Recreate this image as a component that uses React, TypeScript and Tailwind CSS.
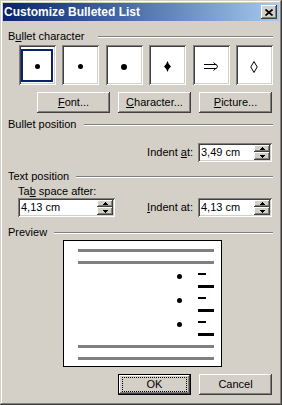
import React from "react";

const raised =
  "shadow-[inset_-1px_-1px_0_#404040,inset_1px_1px_0_#ffffff,inset_-2px_-2px_0_#808080,inset_2px_2px_0_#d4d0c8]";
const sunken =
  "shadow-[inset_1px_1px_0_#808080,inset_-1px_-1px_0_#ffffff,inset_2px_2px_0_#404040,inset_-2px_-2px_0_#d4d0c8]";

function GroupHeader({ children, gap, className = "" }: { children: React.ReactNode; gap: string; className?: string }) {
  return (
    <div className={`flex items-center h-[13px] ${className}`}>
      <span className="whitespace-nowrap">{children}</span>
      <div className={`flex-1 h-[2px] border-t border-t-[#808080] border-b border-b-white ${gap}`} />
    </div>
  );
}

function Button({ children, isDefault = false }: { children: React.ReactNode; isDefault?: boolean }) {
  if (isDefault) {
    return (
      <div className={`relative w-[73px] h-[21px] border border-black flex items-center justify-center ${raised}`}>
        <div className="absolute top-[2px] bottom-[2px] left-[3px] right-[3px] border border-dotted border-black" />
        <span>{children}</span>
      </div>
    );
  }
  return (
    <div className={`w-[73px] h-[21px] flex items-center justify-center ${raised}`}>
      <span>{children}</span>
    </div>
  );
}

function Spin() {
  return (
    <div className="flex flex-col w-[16px] h-full py-[2px] mr-[2px]">
      <div className={`h-[7px] flex items-center justify-center bg-[#d4d0c8] ${raised}`}>
        <svg width="5" height="3" viewBox="0 0 5 3" shapeRendering="crispEdges">
          <rect x="2" y="0" width="1" height="1" fill="#000" />
          <rect x="1" y="1" width="3" height="1" fill="#000" />
          <rect x="0" y="2" width="5" height="1" fill="#000" />
        </svg>
      </div>
      <div className={`h-[8px] flex items-center justify-center bg-[#d4d0c8] ${raised}`}>
        <svg width="5" height="3" viewBox="0 0 5 3" shapeRendering="crispEdges">
          <rect x="0" y="0" width="5" height="1" fill="#000" />
          <rect x="1" y="1" width="3" height="1" fill="#000" />
          <rect x="2" y="2" width="1" height="1" fill="#000" />
        </svg>
      </div>
    </div>
  );
}

function SpinInput({ value, w }: { value: string; w: string }) {
  return (
    <div className={`${w} h-[19px] bg-white flex items-center ${sunken}`}>
      <span className="flex-1 pl-[3px] text-black">{value}</span>
      <Spin />
    </div>
  );
}

function BulletBox({ children, selected = false }: { children: React.ReactNode; selected?: boolean }) {
  return (
    <div className={`relative w-[37px] h-[40px] bg-white flex items-center justify-center pt-[3px] ${sunken}`}>
      {selected && <div className="absolute top-[4px] bottom-[3px] left-[2px] right-[3px] border-2 border-[#0a246a]" />}
      {children}
    </div>
  );
}

function Dot({ size }: { size: string }) {
  return <div className={`${size} rounded-full bg-black`} />;
}

function PreviewItem() {
  return (
    <div className="h-[24px] flex">
      <div className="w-[99px] shrink-0" />
      <div className="w-[5px] h-[5px] shrink-0 mt-[1px] rounded-full bg-black" />
      <div className="w-[16px] shrink-0 ml-[16px] flex flex-col items-start">
        <div className="w-[8px] h-[2px] bg-black" />
        <div className="w-[16px] h-[3px] mt-[10px] bg-black" />
      </div>
    </div>
  );
}

export default function App() {
  return (
    <div
      className={`w-[282px] h-[405px] bg-[#d4d0c8] p-[3px] flex flex-col text-black shadow-[inset_-1px_-1px_0_#404040,inset_1px_1px_0_#d4d0c8,inset_-2px_-2px_0_#808080,inset_2px_2px_0_#ffffff]`}
      style={{ fontFamily: '"Liberation Sans", Arial, sans-serif' }}
    >
      {/* Title bar */}
      <div className="h-[18px] flex items-center bg-gradient-to-r from-[#0a246a] to-[#a6caf0] pl-[1px] pr-[2px]">
        <span className="flex-1 text-white font-bold text-[12px] leading-[14px] whitespace-nowrap">
          Customize Bulleted List
        </span>
        <div className={`w-[16px] h-[14px] bg-[#d4d0c8] flex items-center justify-center ${raised}`}>
          <svg width="8" height="7" viewBox="0 0 8 7">
            <path d="M0.5 0.5L7.5 6.5M7.5 0.5L0.5 6.5" stroke="#000" strokeWidth="1.7" />
          </svg>
        </div>
      </div>

      <div className="flex flex-col pl-[5px] pr-[6px] text-[11px] leading-[13px]">
        <GroupHeader gap="ml-[14px]" className="mt-[9px]">
          B<span className="underline">u</span>llet character
        </GroupHeader>

        <div className="flex mt-[2px] pl-[11px] gap-[6.4px]">
          <BulletBox selected>
            <Dot size="w-[5px] h-[5px]" />
          </BulletBox>
          <BulletBox>
            <Dot size="w-[5px] h-[5px]" />
          </BulletBox>
          <BulletBox>
            <Dot size="w-[6px] h-[6px]" />
          </BulletBox>
          <BulletBox>
            <svg width="7" height="11" viewBox="0 0 7 11">
              <path d="M3.5 0 Q4.5 3.5 7 5.5 Q4.5 7.5 3.5 11 Q2.5 7.5 0 5.5 Q2.5 3.5 3.5 0Z" fill="#000" />
            </svg>
          </BulletBox>
          <BulletBox>
            <svg width="15" height="9" viewBox="0 0 15 9">
              <path d="M0 2.5H12.5M0 6.5H12.5M9.5 0.5L14 4.5L9.5 8.5" stroke="#000" strokeWidth="1" fill="none" />
            </svg>
          </BulletBox>
          <BulletBox>
            <svg width="8" height="12" viewBox="0 0 8 12">
              <path d="M4 0.5L7.2 6L4 11.5L0.8 6Z" stroke="#000" strokeWidth="1" fill="none" />
            </svg>
          </BulletBox>
        </div>

        <div className="flex justify-end gap-[8px] pr-[1px] mt-[7px]">
          <Button>
            <span className="underline">F</span>ont...
          </Button>
          <Button>
            <span className="underline">C</span>haracter...
          </Button>
          <Button>
            <span className="underline">P</span>icture...
          </Button>
        </div>

        <GroupHeader gap="ml-[7px]" className="mt-[5px]">
          Bullet position
        </GroupHeader>

        <div className="flex justify-end items-center gap-[5px] pr-[1px] mt-[12px]">
          <span>
            Indent <span className="underline">a</span>t:
          </span>
          <SpinInput value="3,49 cm" w="w-[74px]" />
        </div>

        <GroupHeader gap="ml-[7px]" className="mt-[8px]">
          Text position
        </GroupHeader>

        <div className="flex items-end mt-[2px]">
          <div className="flex flex-col ml-[10px]">
            <span className="h-[13px]">
              Ta<span className="underline">b</span> space after:
            </span>
            <SpinInput value="4,13 cm" w="w-[97px]" />
          </div>
          <div className="flex-1 flex justify-end items-center gap-[5px] pr-[1px]">
            <span>
              <span className="underline">I</span>ndent at:
            </span>
            <SpinInput value="4,13 cm" w="w-[74px]" />
          </div>
        </div>

        <GroupHeader gap="ml-[7px]" className="mt-[9px]">
          Preview
        </GroupHeader>

        <div className="ml-[55px] mt-[1px] w-[159px] h-[127px] bg-white border border-black flex flex-col pl-[14px]">
          <div className="w-[136px] h-[3px] bg-[#808080] mt-[8px]" />
          <div className="w-[136px] h-[3px] bg-[#808080] mt-[9px]" />
          <div className="mt-[9px] flex flex-col">
            <PreviewItem />
            <PreviewItem />
            <PreviewItem />
          </div>
          <div className="w-[136px] h-[3px] bg-[#808080]" />
          <div className="w-[136px] h-[3px] bg-[#808080] mt-[9px]" />
        </div>

        <div className="flex justify-end gap-[8px] pr-[1px] mt-[7px]">
          <Button isDefault>OK</Button>
          <Button>Cancel</Button>
        </div>
      </div>
    </div>
  );
}
